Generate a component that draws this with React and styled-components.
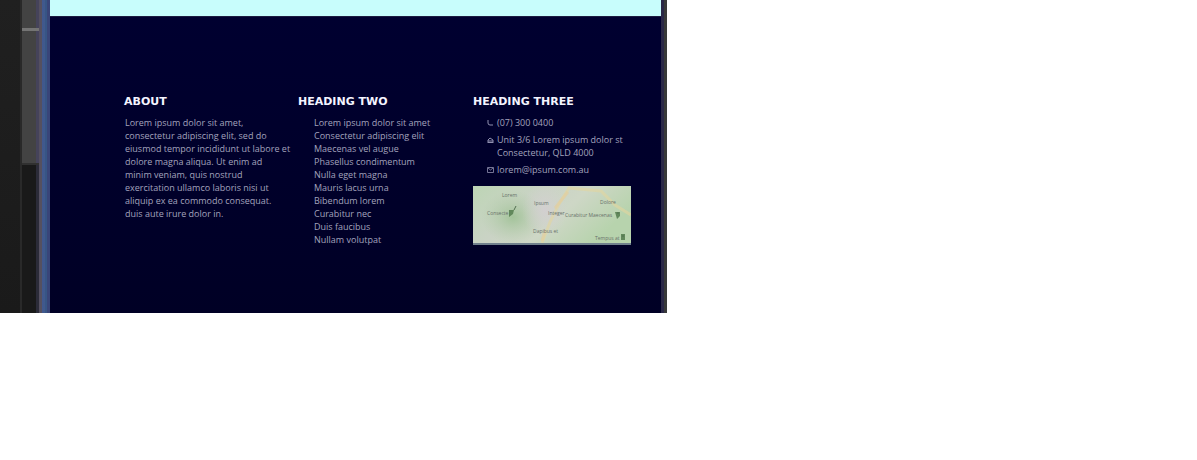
import React from "react";
import styled, { createGlobalStyle } from "styled-components";

const GlobalStyle = createGlobalStyle`
  * { box-sizing: border-box; }
  body { margin: 0; background: #fff; font-family: "Open Sans", "Noto Sans", sans-serif; }
`;

const Window = styled.div`
  display: flex;
  width: 100%;
  max-width: 667px;
  background: #1c1c1c;
`;

const Desktop = styled.div`
  flex: 0 0 20px;
  background: linear-gradient(#202020, #1a1a1a);
`;

const SidePanel = styled.div`
  flex: 0 0 19px;
  display: flex;
  flex-direction: column;
  border-left: 2px solid #292929;
  background: linear-gradient(to right, transparent 14px, #2b2b38 14px), #191919;
`;

const PanelBlock = styled.div`
  height: ${(p) => p.$height}px;
  background: linear-gradient(to right, transparent 14px, #45435a 14px), #434343;
  border-bottom: ${(p) => (p.$line ? "3px solid #747474" : "2px solid #303030")};
`;

const WindowEdge = styled.div`
  flex: 0 0 11px;
  background: linear-gradient(to right, #55505f 3px, #40578f 3px, #405a8c 6px, #375585 6px, #375585 8px, #394579 8px);
`;

const Page = styled.div`
  flex: 1;
  min-width: 0;
`;

const Hero = styled.div`
  height: 16px;
  background: #c8fdfc;
`;

const Footer = styled.footer`
  display: grid;
  grid-template-columns: 174px 175px 1fr;
  padding: 78px 30px 67px 74px;
  border-top: 1px solid #1c1c40;
  background: linear-gradient(#000030, #000025);
  color: #a3a3bd;
  font-size: 9px;
  line-height: 13px;
`;

const Column = styled.section`
  min-width: 0;
  white-space: nowrap;
`;

const Heading = styled.h2`
  margin: 0 0 8px;
  color: #f4f4ff;
  font-family: "DejaVu Sans", sans-serif;
  font-size: 11px;
  line-height: 13px;
  font-weight: 700;
`;

const About = styled.p`
  margin: 0;
  padding-left: 1px;
`;

const List = styled.ul`
  margin: 0;
  padding: 0 0 0 16px;
  list-style: none;
`;

const FooterLink = styled.a`
  color: inherit;
  text-decoration: none;
`;

const Contact = styled.address`
  display: flex;
  flex-direction: column;
  gap: 4px;
  padding-left: 13px;
  font-style: normal;
`;

const ContactRow = styled.div`
  display: flex;
  gap: 3px;
`;

const Icon = styled.svg`
  flex: none;
  width: 8px;
  height: 8px;
  margin-top: 3px;
  fill: none;
  stroke: #9090b0;
`;

const Map = styled.svg`
  display: block;
  width: 100%;
  height: 59px;
  margin-top: 10px;
  border-bottom: 2px solid #70808c;
  font-family: "Open Sans", sans-serif;
  font-size: 5px;
  fill: #68716a;
`;

const Frame = styled.div`
  flex: 0 0 6px;
  background: linear-gradient(to right, #2a2847 3px, #383939 3px);
`;

const about = [
  "Lorem ipsum dolor sit amet,",
  "consectetur adipiscing elit, sed do",
  "eiusmod tempor incididunt ut labore et",
  "dolore magna aliqua. Ut enim ad",
  "minim veniam, quis nostrud",
  "exercitation ullamco laboris nisi ut",
  "aliquip ex ea commodo consequat.",
  "duis aute irure dolor in.",
];

const links = [
  "Lorem ipsum dolor sit amet",
  "Consectetur adipiscing elit",
  "Maecenas vel augue",
  "Phasellus condimentum",
  "Nulla eget magna",
  "Mauris lacus urna",
  "Bibendum lorem",
  "Curabitur nec",
  "Duis faucibus",
  "Nullam volutpat",
];

function LocationMap() {
  return (
    <Map viewBox="0 0 158 57" preserveAspectRatio="xMidYMid slice" role="img" aria-label="Location map">
      <defs>
        <linearGradient id="land" x2="1" y2="0.4">
          <stop offset="0" stopColor="#bdd5b5" />
          <stop offset="0.4" stopColor="#cad3c5" />
          <stop offset="0.65" stopColor="#ced7c6" />
          <stop offset="1" stopColor="#b7d3ad" />
        </linearGradient>
        <radialGradient id="hill">
          <stop offset="0" stopColor="#a3c39a" />
          <stop offset="1" stopColor="#b3cdaa" stopOpacity="0" />
        </radialGradient>
        <radialGradient id="town">
          <stop offset="0" stopColor="#d2cfd0" />
          <stop offset="1" stopColor="#d2d2cf" stopOpacity="0" />
        </radialGradient>
      </defs>
      <rect width="158" height="57" fill="url(#land)" />
      <ellipse cx="40" cy="31" rx="32" ry="27" fill="url(#hill)" />
      <ellipse cx="72" cy="24" rx="23" ry="27" fill="url(#town)" />
      <path d="M69 57L77 36L86 18L96 2L128 5L142 19L158 29" fill="none" stroke="#e2d69f" strokeWidth="3" opacity="0.6" />
      <path d="M82 22L95 6M69 55L72 44" fill="none" stroke="#e5cd9c" strokeWidth="3" opacity="0.6" />
      <text x="29" y="11">Lorem</text>
      <text x="61" y="19">Ipsum</text>
      <text x="127" y="18">Dolore</text>
      <text x="14" y="29">Consecte</text>
      <text x="75" y="29">Integer</text>
      <text x="92" y="31">Curabitur Maecenas</text>
      <text x="60" y="47">Dapibus et</text>
      <text x="122" y="54">Tempus at</text>
      <path d="M36 24h5l-1 4l-4 3zM142 26h5v4l-3 3zM148 48h4v6h-4z" fill="#61885b" />
      <path d="M41 24l2-4M144 27h2M149 50h2" stroke="#536f51" fill="none" />
    </Map>
  );
}

export default function App() {
  return (
    <>
      <GlobalStyle />
      <Window>
        <Desktop />
        <SidePanel>
          <PanelBlock $height={31} $line />
          <PanelBlock $height={134} />
        </SidePanel>
        <WindowEdge />
        <Page>
          <Hero />
          <Footer>
            <Column>
              <Heading>ABOUT</Heading>
              <About>
                {about.map((line) => (
                  <React.Fragment key={line}>{line}<br /></React.Fragment>
                ))}
              </About>
            </Column>
            <Column>
              <Heading>HEADING TWO</Heading>
              <List>
                {links.map((label) => (
                  <li key={label}><FooterLink href="#">{label}</FooterLink></li>
                ))}
              </List>
            </Column>
            <Column>
              <Heading>HEADING THREE</Heading>
              <Contact>
                <ContactRow>
                  <Icon viewBox="0 0 8 8"><path d="M2 1v3q0 2 2 2h3" /></Icon>
                  <FooterLink href="tel:0730000400">(07) 300 0400</FooterLink>
                </ContactRow>
                <ContactRow>
                  <Icon viewBox="0 0 8 8"><path d="M2 7V4l2-2l3 2v3M2 5h5M2 6.5h5" /></Icon>
                  <span>Unit 3/6 Lorem ipsum dolor st<br />Consectetur, QLD 4000</span>
                </ContactRow>
                <ContactRow>
                  <Icon viewBox="0 0 8 8"><path d="M1.5 1.5h6v5h-6zM2 2l2.500 2l2.500-2" strokeWidth="0.8" /></Icon>
                  <FooterLink href="mailto:lorem@ipsum.com.au">lorem@ipsum.com.au</FooterLink>
                </ContactRow>
              </Contact>
              <LocationMap />
            </Column>
          </Footer>
        </Page>
        <Frame />
      </Window>
    </>
  );
}
